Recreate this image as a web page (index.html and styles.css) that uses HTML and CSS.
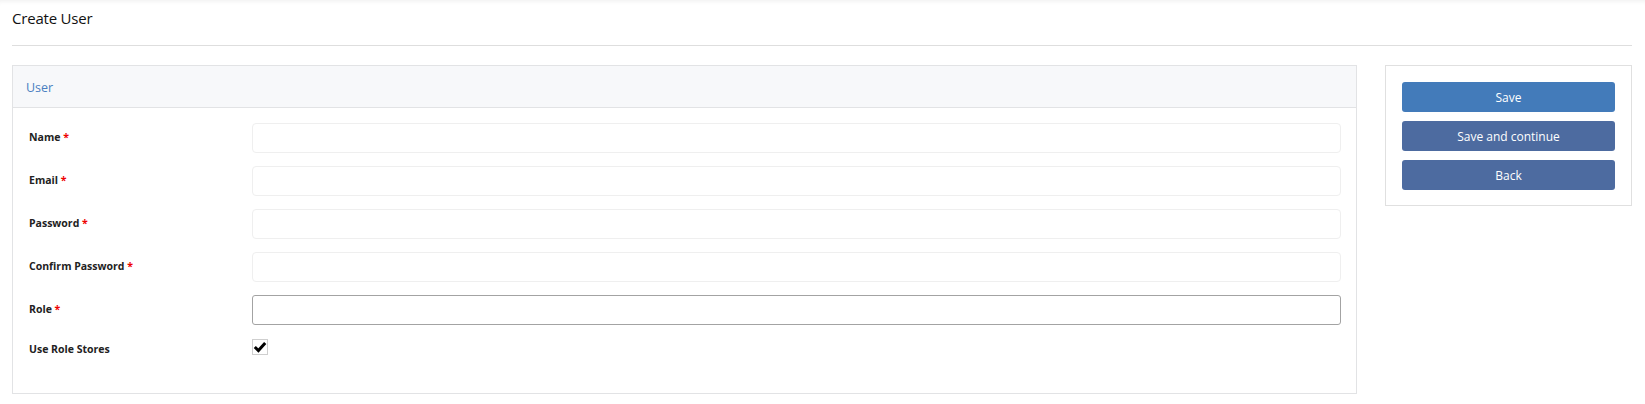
FILE: index.html
```html
<!DOCTYPE html>
<html lang="en">
<head>
<meta charset="utf-8">
<title>Create User</title>
<link rel="stylesheet" href="styles.css">
</head>
<body>
<div class="page">
  <h1 class="title">Create User</h1>
  <div class="layout">
    <section class="panel">
      <div class="panel-head">User</div>
      <div class="panel-body">
        <div class="row">
          <label class="lbl">Name <span class="req">*</span></label>
          <input class="field" type="text">
        </div>
        <div class="row">
          <label class="lbl">Email <span class="req">*</span></label>
          <input class="field" type="text">
        </div>
        <div class="row">
          <label class="lbl">Password <span class="req">*</span></label>
          <input class="field" type="password">
        </div>
        <div class="row">
          <label class="lbl">Confirm Password <span class="req">*</span></label>
          <input class="field" type="password">
        </div>
        <div class="row">
          <label class="lbl">Role <span class="req">*</span></label>
          <input class="field field-role" type="text">
        </div>
        <div class="row row-check">
          <label class="lbl">Use Role Stores</label>
          <span class="check">
            <svg width="14" height="14" viewBox="0 0 14 14"><path d="M1.8 7 L5.4 10.6 L12.2 3" fill="none" stroke="#000" stroke-width="3" stroke-linejoin="miter" stroke-linecap="butt"/></svg>
          </span>
        </div>
      </div>
    </section>
    <aside class="side">
      <button class="btn btn-primary">Save</button>
      <button class="btn">Save and continue</button>
      <button class="btn">Back</button>
    </aside>
  </div>
</div>
</body>
</html>
```
FILE: styles.css
```css
* { box-sizing: border-box; }
html, body { margin: 0; background: #fff; }
body {
  font-family: "Open Sans", "Noto Sans", "Liberation Sans", sans-serif;
  color: #222;
}
.page {
  padding: 0 13px 0 12px;
  box-shadow: inset 0 5px 5px -4px rgba(0,0,0,0.07);
  min-height: 404px;
}
.title {
  margin: 0;
  padding: 8px 0 0;
  height: 46px;
  font-size: 15px;
  font-weight: 500;
  line-height: 20px;
  color: #111;
  letter-spacing: -0.2px;
  border-bottom: 1px solid #dedede;
}
.layout {
  display: grid;
  grid-template-columns: 1fr 247px;
  gap: 28px;
  align-items: start;
  margin-top: 19px;
}
.panel {
  border: 1px solid #e2e3e5;
}
.panel-head {
  height: 42px;
  display: flex;
  align-items: center;
  padding: 1px 13px 0;
  background: #f7f8fa;
  border-bottom: 1px solid #e2e3e5;
  color: #4a7fc1;
  font-size: 12.5px;
}
.panel-body {
  padding: 15px 15px 31px 16px;
  display: flex;
  flex-direction: column;
  gap: 13px;
}
.row {
  display: grid;
  grid-template-columns: 223px 1fr;
  align-items: center;
}
.lbl {
  font-size: 10.5px;
  font-weight: 700;
  color: #222;
  padding-bottom: 2px;
}
.req { color: #e00; }
.field {
  height: 30px;
  border: 1px solid #efefef;
  border-radius: 4px;
  background: #fff;
  font: inherit;
  outline: none;
}
.field-role {
  border-color: #a3a3a3;
  border-radius: 3px;
}
.row-check {
  min-height: 24px;
}
.check {
  align-self: start;
  margin-top: 1px;
  width: 16px;
  height: 16px;
  border: 1px solid #cfcfcf;
  display: flex;
  align-items: center;
  justify-content: center;
  background: #fff;
}
.check svg { display: block; }
.side {
  border: 1px solid #e0e0e0;
  padding: 16px 16px 15px;
  display: flex;
  flex-direction: column;
  gap: 9px;
}
.btn {
  height: 30px;
  border: 0;
  border-radius: 3px;
  background: #4d6ba0;
  color: #fff;
  font-family: inherit;
  font-size: 12px;
  cursor: pointer;
}
.btn-primary { background: #437bba; }
```
